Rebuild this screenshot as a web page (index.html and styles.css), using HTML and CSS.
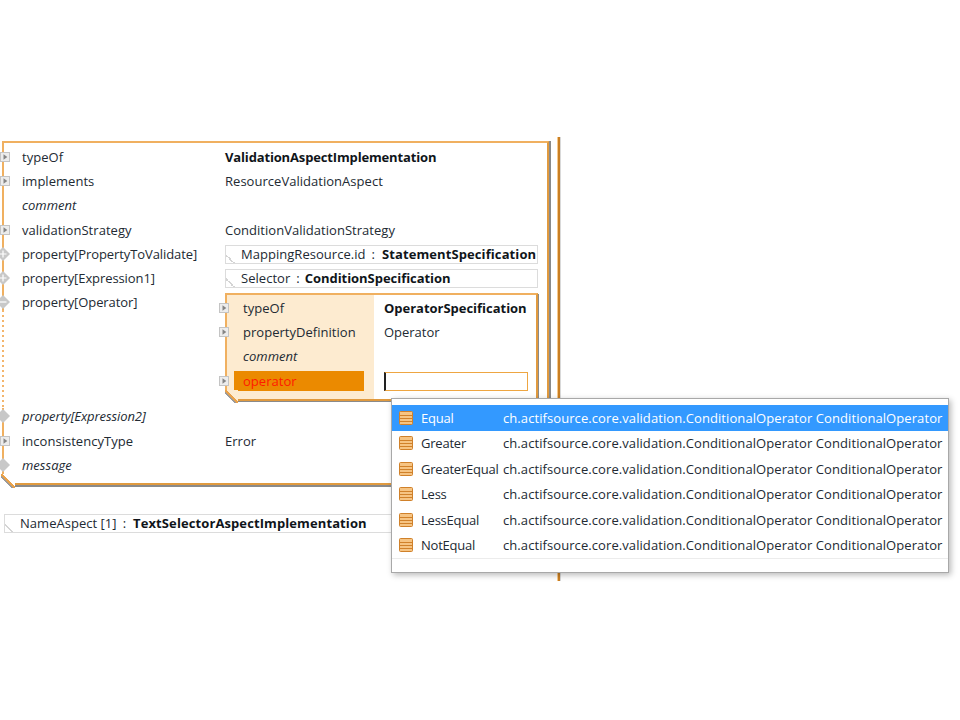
FILE: index.html
```html
<!DOCTYPE html>
<html lang="en">
<head>
<meta charset="utf-8">
<title>Validation aspect editor</title>
<link rel="stylesheet" href="styles.css">
</head>
<body>
<svg class="defs" width="0" height="0" aria-hidden="true">
  <symbol id="h-arrow" viewBox="0 0 10 10">
    <rect x="0.5" y="0.5" width="9" height="9" fill="#ececec" stroke="#c4c4c4"/>
    <path d="M3.5 2.2 7.3 5 3.5 7.8z" fill="#858585"/>
  </symbol>
  <symbol id="h-plus" viewBox="0 0 14 14">
    <path d="M7 0 14 7 7 14 0 7z" fill="#c8c8c8"/>
    <path d="M3.5 7h7M7 3.5v7" stroke="#fff" stroke-width="1.2"/>
  </symbol>
  <symbol id="h-minus" viewBox="0 0 14 14">
    <path d="M7 0 14 7 7 14 0 7z" fill="#c8c8c8"/>
    <path d="M3.5 7h7" stroke="#fff" stroke-width="1.2"/>
  </symbol>
  <symbol id="h-diamond" viewBox="0 0 14 14">
    <path d="M7 0 14 7 7 14 0 7z" fill="#c8c8c8"/>
  </symbol>
  <symbol id="i-enum" viewBox="0 0 14 14">
    <rect x="0.5" y="0.5" width="13" height="13" rx="1" fill="#f6c483" stroke="#d0812a"/>
    <path d="M1 4.5h12M1 7.5h12M1 10.5h12" stroke="#d0812a"/>
  </symbol>
</svg>
<main class="stage">
  <div class="editor">
    <section class="box">
      <span class="dotted"></span>
      <div class="row"><svg class="handle"><use href="#h-arrow"/></svg><span class="label">typeOf</span><b class="value title">ValidationAspectImplementation</b></div>
      <div class="row"><svg class="handle"><use href="#h-arrow"/></svg><span class="label">implements</span><span class="value">ResourceValidationAspect</span></div>
      <div class="row"><i class="label">comment</i></div>
      <div class="row"><svg class="handle"><use href="#h-arrow"/></svg><span class="label">validationStrategy</span><span class="value">ConditionValidationStrategy</span></div>
      <div class="row"><svg class="handle dia"><use href="#h-plus"/></svg><span class="label prop">property[PropertyToValidate]</span><div class="pill pill-a">MappingResource.id<span class="sep">:</span><b>StatementSpecification</b></div></div>
      <div class="row"><svg class="handle dia"><use href="#h-plus"/></svg><span class="label prop">property[Expression1]</span><div class="pill pill-b">Selector<span class="sep">:</span><b>ConditionSpecification</b></div></div>
      <div class="row row-tall"><svg class="handle dia"><use href="#h-minus"/></svg><span class="label prop">property[Operator]</span>
        <section class="inner">
          <div class="inner-row"><svg class="handle in"><use href="#h-arrow"/></svg><span class="in-label">typeOf</span><b class="in-value">OperatorSpecification</b></div>
          <div class="inner-row"><svg class="handle in"><use href="#h-arrow"/></svg><span class="in-label">propertyDefinition</span><span class="in-value">Operator</span></div>
          <div class="inner-row"><i class="in-label">comment</i><span class="in-value"></span></div>
          <div class="inner-row"><svg class="handle in"><use href="#h-arrow"/></svg><span class="in-label"><span class="error">operator</span></span><span class="in-value"><span class="field"></span></span></div>
        </section>
      </div>
      <div class="row"><svg class="handle dia"><use href="#h-diamond"/></svg><i class="label prop">property[Expression2]</i></div>
      <div class="row"><svg class="handle"><use href="#h-arrow"/></svg><span class="label">inconsistencyType</span><span class="value">Error</span></div>
      <div class="row"><svg class="handle dia"><use href="#h-diamond"/></svg><i class="label">message</i></div>
    </section>
    <div class="pill pill-name">NameAspect [1]<span class="sep">:</span><b>TextSelectorAspectImplementation</b></div>
  </div>
  <div class="rule"></div>
</main>
<ul class="popup">
  <li class="opt selected"><svg class="enum"><use href="#i-enum"/></svg><span class="opt-name">Equal</span><span class="opt-detail">ch.actifsource.core.validation.ConditionalOperator ConditionalOperator</span></li>
  <li class="opt"><svg class="enum"><use href="#i-enum"/></svg><span class="opt-name">Greater</span><span class="opt-detail">ch.actifsource.core.validation.ConditionalOperator ConditionalOperator</span></li>
  <li class="opt"><svg class="enum"><use href="#i-enum"/></svg><span class="opt-name">GreaterEqual</span><span class="opt-detail">ch.actifsource.core.validation.ConditionalOperator ConditionalOperator</span></li>
  <li class="opt"><svg class="enum"><use href="#i-enum"/></svg><span class="opt-name">Less</span><span class="opt-detail">ch.actifsource.core.validation.ConditionalOperator ConditionalOperator</span></li>
  <li class="opt"><svg class="enum"><use href="#i-enum"/></svg><span class="opt-name">LessEqual</span><span class="opt-detail">ch.actifsource.core.validation.ConditionalOperator ConditionalOperator</span></li>
  <li class="opt"><svg class="enum"><use href="#i-enum"/></svg><span class="opt-name">NotEqual</span><span class="opt-detail">ch.actifsource.core.validation.ConditionalOperator ConditionalOperator</span></li>
</ul>
</body>
</html>
```

FILE: styles.css
```css
* { box-sizing: border-box; }
html, body { margin: 0; height: 100%; background: #fff; overflow: hidden; }
body {
  position: relative;
  font-family: "Open Sans", "Noto Sans", sans-serif;
  font-size: 13px;
  letter-spacing: 0.03px;
  color: #222a33;
}
b { color: #10151a; letter-spacing: 0; }
b.title { letter-spacing: -0.15px; }
.defs { position: absolute; }

.stage { display: flex; align-items: flex-start; padding-top: 137px; }
.editor { width: 557px; padding: 4px 0 0 2px; flex: none; }
.rule {
  width: 4px;
  height: 444px;
  flex: none;
  background: linear-gradient(to right, #f9c98a 0 1px, #c97f24 1px 3px, #d9d9d9 3px);
}

.box {
  position: relative;
  width: 547px;
  height: 344px;
  padding-top: 1.7px;
  border: 2px solid #f0b060;
  border-right-color: #e09a3f;
  border-bottom-color: #e09a3f;
  box-shadow: 1px 1px 0 1px #8a8a8a;
}
.box::after {
  content: "";
  position: absolute;
  left: -3px;
  bottom: -5px;
  width: 14px;
  height: 14px;
  background: linear-gradient(to top right, #fff 36%, #9a9a9a 36% 43%, #e9a14a 43% 56%, #fff 56%);
}
.dotted {
  position: absolute;
  left: -2px;
  top: 167px;
  width: 2px;
  height: 98px;
  background: repeating-linear-gradient(to bottom, #f3b56b 0 2px, #fff 2px 5px);
}
.row {
  position: relative;
  display: flex;
  align-items: flex-start;
  height: 24.3px;
  line-height: 24.3px;
  padding-left: 18px;
}
.row-tall { height: 114px; }
.label { width: 203px; flex: none; }
.label.prop { letter-spacing: -0.09px; }
.value { flex: none; }
.handle { position: absolute; left: -4px; top: 7px; width: 10px; height: 10px; }
.handle.dia { left: -8px; top: 5px; width: 14px; height: 14px; }

.pill {
  position: relative;
  display: flex;
  flex: none;
  width: 313px;
  height: 19px;
  line-height: 17px;
  padding-left: 15px;
  margin-top: 3px;
  border: 1px solid #dcdcdc;
  white-space: nowrap;
  overflow: hidden;
  background: #fff;
}
.pill b { letter-spacing: 0.1px; }
.pill::before {
  content: "";
  position: absolute;
  left: -1px;
  bottom: -1px;
  width: 10px;
  height: 10px;
  background: linear-gradient(to top right, #fff 45%, #d4d4d4 45% 55%, transparent 55%);
}
.sep { margin: 0 7px 0 6px; }
.pill-b .sep { margin-right: 5px; }
.pill-b b { letter-spacing: -0.04px; }
.pill-name { width: 400px; margin: 29px 0 0 2px; }

.inner {
  position: relative;
  flex: none;
  width: 313px;
  height: 108px;
  margin-top: 2.3px;
  padding-top: 1px;
  border: 2px solid #f0b060;
  border-right-color: #e09a3f;
  border-bottom-color: #e09a3f;
  background: linear-gradient(to right, #fdebd0 0 147px, #fff 147px);
  box-shadow: 1px 1px 0 0 #8a8a8a;
}
.inner::after {
  content: "";
  position: absolute;
  left: -2px;
  bottom: -4px;
  width: 13px;
  height: 13px;
  background: linear-gradient(to top right, #fff 36%, #9a9a9a 36% 43%, #e9a14a 43% 56%, #fdebd0 56%);
}
.inner-row { position: relative; display: flex; height: 24.3px; line-height: 24.3px; }
.handle.in { left: -8px; top: 7px; }
.in-label { width: 146px; padding-left: 16px; flex: none; }
.in-value { padding-left: 11px; flex: 1; letter-spacing: -0.02px; }
.error {
  display: block;
  width: 130px;
  height: 20px;
  line-height: 20px;
  margin: 2px 0 0 -9px;
  padding-left: 9px;
  color: #ff1a00;
  background: #eb8a00;
}
.field {
  display: block;
  width: 144px;
  height: 19px;
  margin-top: 3px;
  border: 1px solid #eea642;
  border-left: 2px solid #222;
  background: #fff;
}

.popup {
  position: absolute;
  left: 391px;
  top: 398px;
  width: 558px;
  height: 175px;
  margin: 0;
  padding: 6px 0 0;
  list-style: none;
  background: #fff;
  border: 1px solid #a8a8a8;
  box-shadow: 2px 2px 6px rgba(0, 0, 0, .28);
}
.popup::after {
  content: "";
  position: absolute;
  left: 0;
  right: 0;
  top: 159px;
  border-top: 1px solid #ececec;
}
.opt {
  display: flex;
  align-items: center;
  height: 25.5px;
  padding-left: 7px;
  white-space: nowrap;
}
.selected { background: #3399ff; color: #fff; }
.enum { width: 14px; height: 14px; flex: none; margin-right: 8px; }
.opt-name { width: 82px; flex: none; letter-spacing: -0.22px; }
.opt-detail { letter-spacing: 0.08px; }
```
